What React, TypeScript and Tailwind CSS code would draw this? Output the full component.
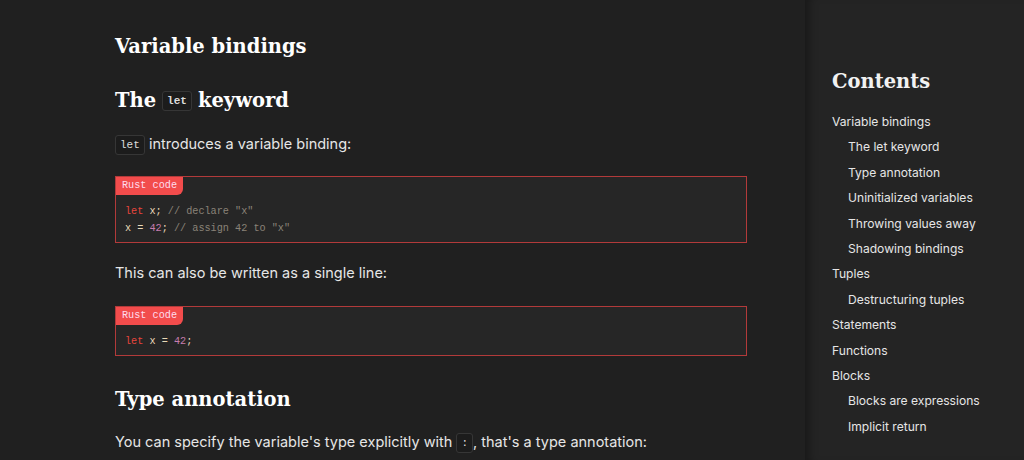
const serif = "font-['DejaVu_Serif',serif]";
const sans = "font-['Inter','Liberation_Sans',sans-serif]";
const mono = "font-['Liberation_Mono','DejaVu_Sans_Mono',monospace]";

function Code({ children }: { children: React.ReactNode }) {
  return (
    <code
      className={`${mono} inline-block rounded-[3px] border border-[#363636] bg-[#1c1c1c] px-[4px] text-[11px] leading-[18px] text-[#ddd] align-middle`}
    >
      {children}
    </code>
  );
}

function CodeBlock({ lines }: { lines: React.ReactNode[] }) {
  return (
    <div className="flex w-[632px] flex-col items-start border border-[#b23a3a] bg-[#262626]">
      <div
        className={`${mono} rounded-br-[6px] bg-[#f24c4c] px-[6px] text-[10.2px] leading-[18px] text-[#fde]`}
      >
        Rust code
      </div>
      <div className={`${mono} px-[9px] pt-[8px] pb-[5px] text-[10.2px] leading-[17px] text-[#e8d9b8]`}>
        {lines.map((l, i) => (
          <div key={i}>{l}</div>
        ))}
      </div>
    </div>
  );
}

const toc: [string, boolean][] = [
  ["Variable bindings", false],
  ["The let keyword", true],
  ["Type annotation", true],
  ["Uninitialized variables", true],
  ["Throwing values away", true],
  ["Shadowing bindings", true],
  ["Tuples", false],
  ["Destructuring tuples", true],
  ["Statements", false],
  ["Functions", false],
  ["Blocks", false],
  ["Blocks are expressions", true],
  ["Implicit return", true],
];

export default function App() {
  const kw = "text-[#e8453c]";
  const cm = "text-[#8a8378]";
  const num = "text-[#c77dae]";
  return (
    <div className="flex h-[460px] w-[1024px] overflow-hidden bg-[#202020]">
      {/* main column */}
      <main className={`${sans} w-[805px] shrink-0 pl-[115px] pt-[32px] text-[#e6e6e6]`}>
        <h1 className={`${serif} text-[19.5px] font-bold leading-[30px] text-white`}>Variable bindings</h1>
        <h2 className={`${serif} mt-[24px] flex items-center gap-[6px] text-[19.5px] font-bold leading-[30px] text-white`}>
          The <Code>let</Code> keyword
        </h2>
        <p className="mt-[17px] text-[14.5px] leading-[22px]">
          <Code>let</Code> introduces a variable binding:
        </p>
        <div className="mt-[21px]">
          <CodeBlock
            lines={[
              <>
                <span className={kw}>let</span> x; <span className={cm}>// declare "x"</span>
              </>,
              <>
                x = <span className={num}>42</span>; <span className={cm}>// assign 42 to "x"</span>
              </>,
            ]}
          />
        </div>
        <p className="mt-[19px] text-[14.5px] leading-[22px]">This can also be written as a single line:</p>
        <div className="mt-[22px]">
          <CodeBlock
            lines={[
              <>
                <span className={kw}>let</span> x = <span className={num}>42</span>;
              </>,
            ]}
          />
        </div>
        <h2 className={`${serif} mt-[29px] text-[19.5px] font-bold leading-[30px] text-white`}>Type annotation</h2>
        <p className="mt-[16px] text-[14.5px] leading-[22px]">
          You can specify the variable's type explicitly with <Code>:</Code>, that's a type annotation:
        </p>
      </main>

      {/* sidebar */}
      <aside className="relative flex-1 bg-[#242424] pl-[27px] pt-[67px] shadow-[inset_10px_0_10px_-6px_rgba(0,0,0,0.35)]">
        <h2 className={`${serif} text-[19.5px] font-bold leading-[30px] text-[#f2f2f2]`}>Contents</h2>
        <ul className={`${sans} mt-[12px] text-[12.1px] text-[#e6e6e6]`}>
          {toc.map(([t, nested]) => (
            <li key={t} className={`leading-[25.4px] ${nested ? "pl-[16px]" : ""}`}>
              {t}
            </li>
          ))}
        </ul>
      </aside>
    </div>
  );
}
